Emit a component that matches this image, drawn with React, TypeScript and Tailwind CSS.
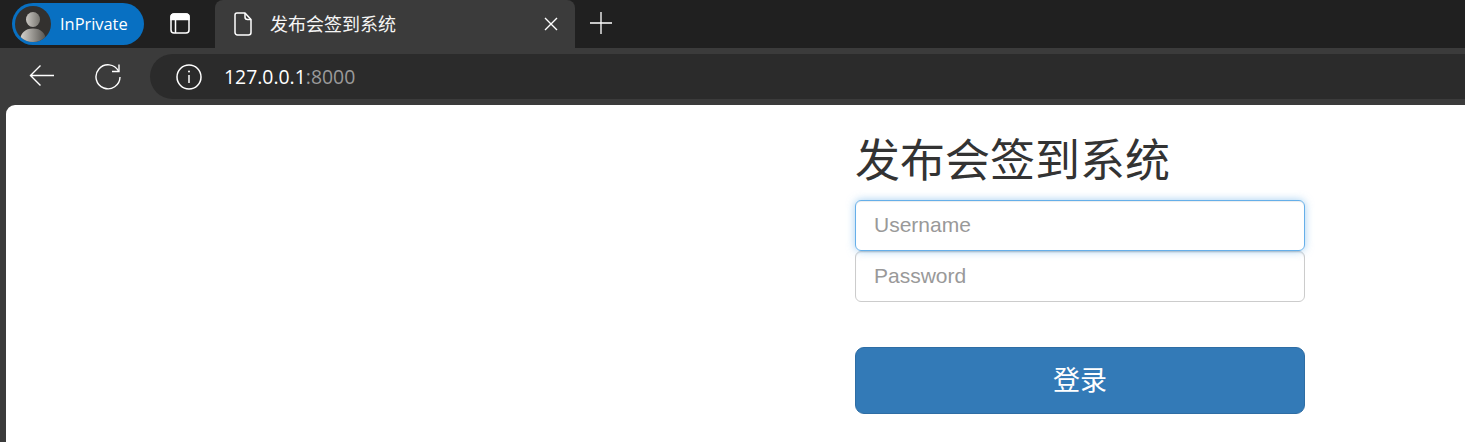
const uiFont = "font-['Open_Sans','Noto_Sans_CJK_SC',sans-serif]";

function Avatar() {
  return (
    <svg width="36" height="36" viewBox="0 0 36 36" className="block">
      <defs>
        <linearGradient id="head" x1="0" y1="0" x2="1" y2="0">
          <stop offset="0" stopColor="#c9c6c1" />
          <stop offset="1" stopColor="#77756f" />
        </linearGradient>
        <linearGradient id="body" x1="0" y1="0" x2="1" y2="0">
          <stop offset="0" stopColor="#d8d5cf" />
          <stop offset="1" stopColor="#55534f" />
        </linearGradient>
        <clipPath id="circle">
          <circle cx="18" cy="18" r="18" />
        </clipPath>
      </defs>
      <circle cx="18" cy="18" r="18" fill="#33312f" />
      <g clipPath="url(#circle)">
        <ellipse cx="18" cy="13.5" rx="7" ry="7.5" fill="url(#head)" />
        <path d="M5 36c0-9 5-13.500 13-13.500s13 4.500 13 13.500z" fill="url(#body)" />
      </g>
    </svg>
  );
}

function WindowIcon() {
  return (
    <svg width="20" height="21" viewBox="0 0 20 21" fill="none" stroke="#fff" strokeWidth="1.5">
      <path d="M1 6.500V4A3 3 0 0 1 4 1h12a3 3 0 0 1 3 3v2.500z" fill="#fff" />
      <rect x="1" y="1" width="18" height="19" rx="3" />
      <path d="M5.500 6.500V20" />
    </svg>
  );
}

function FileIcon() {
  return (
    <svg width="18" height="24" viewBox="0 0 18 24" fill="none" stroke="#fff" strokeWidth="1.500" strokeLinejoin="round">
      <path d="M3 1h8l6 6.500V20.500a2.500 2.500 0 0 1-2.500 2.500H3.500A2.500 2.500 0 0 1 1 20.500V3a2 2 0 0 1 2-2z" />
      <path d="M11 1v4a2.500 2.500 0 0 0 2.500 2.500H17" />
    </svg>
  );
}

function BackIcon() {
  return (
    <svg width="26" height="23" viewBox="0 0 26 23" fill="none" stroke="#fff" strokeWidth="1.400">
      <path d="M25 11.500H2M11.500 1.500 1.500 11.500l10 10" />
    </svg>
  );
}

function ReloadIcon() {
  return (
    <svg width="26" height="26" viewBox="0 0 26 26" fill="none" stroke="#fff" strokeWidth="1.400">
      <path d="M23.500 7A12 12 0 1 0 25 13" />
      <path d="M24 .5v7h-7" />
    </svg>
  );
}

function InfoIcon() {
  return (
    <svg width="26" height="26" viewBox="0 0 26 26" fill="none" stroke="#fff" strokeWidth="1.500">
      <circle cx="13" cy="13" r="12" />
      <path d="M13 11v8" />
      <circle cx="13" cy="7.500" r="1" fill="#fff" stroke="none" />
    </svg>
  );
}

function CloseIcon() {
  return (
    <svg width="14" height="14" viewBox="0 0 14 14" fill="none" stroke="#fff" strokeWidth="1.400">
      <path d="M1 1l12 12M13 1 1 13" />
    </svg>
  );
}

function PlusIcon() {
  return (
    <svg width="22" height="22" viewBox="0 0 22 22" fill="none" stroke="#fff" strokeWidth="1.300">
      <path d="M11 0v22M0 11h22" />
    </svg>
  );
}

export default function App() {
  return (
    <div className={`h-[442px] w-[1465px] overflow-hidden bg-[#3b3b3b] flex flex-col ${uiFont}`}>
      {/* Tab strip */}
      <div className="h-12 shrink-0 bg-[#202020] flex items-start">
        <div className="ml-3 mt-[3px] h-[42px] w-[132px] shrink-0 rounded-full bg-[#0870c2] flex items-center pl-[3px]">
          <Avatar />
          <span className="ml-[9px] text-[16.400px] text-white">InPrivate</span>
        </div>
        <div className="ml-[26px] mt-[13px] shrink-0">
          <WindowIcon />
        </div>
        <div className="ml-[25px] h-12 w-[360px] shrink-0 rounded-t-[8px] bg-[#3b3b3b] flex items-center pl-[19px] pr-[17px]">
          <FileIcon />
          <span className="ml-[18px] text-[18px] text-[#f5f5f5] flex-1">发布会签到系统</span>
          <CloseIcon />
        </div>
        <div className="ml-[15px] mt-[12px] shrink-0">
          <PlusIcon />
        </div>
      </div>

      {/* Address bar */}
      <div className="h-[57px] shrink-0 flex items-center">
        <div className="ml-[29px] shrink-0 -mt-[2px]">
          <BackIcon />
        </div>
        <div className="ml-[40px] shrink-0">
          <ReloadIcon />
        </div>
        <div className="ml-[29px] h-[45px] flex-1 rounded-l-full bg-[#2b2b2b] flex items-center pl-[26px]">
          <InfoIcon />
          <span className="ml-[22px] text-[19.400px] text-white">
            127.0.0.1<span className="text-[#9a9a9a]">:8000</span>
          </span>
        </div>
      </div>

      {/* Page */}
      <main className="ml-[6px] flex-1 rounded-tl-[9px] bg-white flex justify-end pr-40">
        <form className="w-[450px] font-['Liberation_Sans','Noto_Sans_CJK_SC',sans-serif]">
          <h2 className="mt-[32px] mb-[13px] text-[45px] leading-[50px] font-normal text-[#333333]">发布会签到系统</h2>
          <input
            placeholder="Username"
            className="relative z-10 block h-[51px] w-full rounded-[6px] border border-[#66afe9] px-[18px] pb-[2px] text-[21px] text-[#555555] placeholder:text-[#999999] outline-none shadow-[inset_0_1px_1px_rgba(0,0,0,0.075),0_0_8px_rgba(102,175,233,0.6)]"
          />
          <input
            placeholder="Password"
            type="password"
            className="block h-[51px] w-full rounded-[6px] border border-[#cccccc] px-[18px] pb-[2px] text-[21px] text-[#555555] placeholder:text-[#999999] outline-none shadow-[inset_0_1px_1px_rgba(0,0,0,0.075)]"
          />
          <button
            type="button"
            className="mt-[45px] block h-[67px] w-full rounded-[9px] border border-[#2e6da4] bg-[#337ab7] pt-[2px] text-[27px] text-white"
          >
            登录
          </button>
        </form>
      </main>
    </div>
  );
}
